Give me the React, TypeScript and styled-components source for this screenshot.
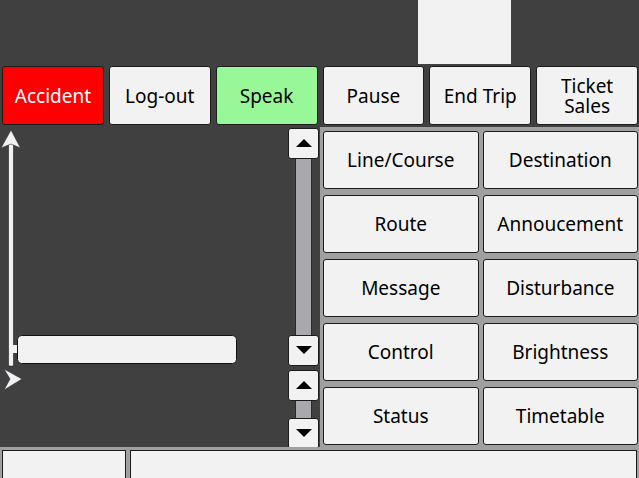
import React from "react";
import styled, { createGlobalStyle } from "styled-components";

const Global = createGlobalStyle`
  html, body { margin: 0; padding: 0; background: #404040; }
  body { font-family: "Segoe UI", "Noto Sans", "Open Sans", sans-serif; }
`;

const Page = styled.div`
  width: 639px;
  height: 478px;
  background: #404040;
  display: flex;
  flex-direction: column;
  overflow: hidden;
`;

const Header = styled.div`
  height: 64px;
  display: flex;
  padding-left: 418px;
  box-sizing: border-box;
`;

const HeaderPanel = styled.div`
  width: 93px;
  height: 64px;
  background: #f2f2f2;
`;

const TopBar = styled.div`
  display: grid;
  grid-template-columns: repeat(6, 1fr);
  column-gap: 5px;
  padding: 2px 1px 2px 2px;
  height: 63px;
  box-sizing: border-box;
`;

const Button = styled.button<{ $bg?: string; $fg?: string }>`
  margin: 0;
  padding: 0;
  box-sizing: border-box;
  border: 1px solid #1c1c1c;
  border-radius: 3px;
  background: ${(p) => p.$bg ?? "#f2f2f2"};
  color: ${(p) => p.$fg ?? "#000"};
  font-family: "Noto Sans", "Open Sans", sans-serif;
  font-size: 19px;
  line-height: 20px;
  display: flex;
  align-items: center;
  justify-content: center;
  text-align: center;
`;

const Main = styled.div`
  display: flex;
  height: 320px;
`;

const ChartArea = styled.div`
  width: 288px;
  height: 320px;
`;

const ScrollColumn = styled.div`
  width: 32px;
  display: flex;
  flex-direction: column;
  padding-top: 1px;
  box-sizing: border-box;
`;

const ScrollButton = styled.div`
  width: 31px;
  height: 31px;
  box-sizing: border-box;
  border: 1px solid #1c1c1c;
  border-radius: 3px;
  background: #f2f2f2;
  display: flex;
  align-items: center;
  justify-content: center;
  flex: none;
`;

const Track = styled.div<{ $h: number }>`
  height: ${(p) => p.$h}px;
  width: 17px;
  margin-left: 7px;
  box-sizing: border-box;
  background: #a9a9ad;
  border-left: 1px solid #2a2a2a;
  border-right: 1px solid #2a2a2a;
  flex: none;
`;

const ScrollGap = styled.div`
  height: 4px;
  flex: none;
`;

const Grid = styled.div`
  flex: 1;
  background: #a0a0a0;
  display: grid;
  grid-template-columns: 1fr 1fr;
  grid-auto-rows: 58px;
  column-gap: 4px;
  row-gap: 6px;
  padding: 4px 1px 2px 3px;
  box-sizing: border-box;
`;

const Footer = styled.div`
  height: 31px;
  background: #a0a0a0;
  display: flex;
  gap: 4px;
  padding: 3px 2px 0 2px;
  box-sizing: border-box;
`;

const StatusBox = styled.div<{ $w?: number }>`
  ${(p) => (p.$w ? `width: ${p.$w}px;` : "flex: 1;")}
  height: 29px;
  box-sizing: border-box;
  background: #f2f2f2;
  border: 1px solid #1c1c1c;
`;

const Up = () => (
  <svg width="16" height="9" viewBox="0 0 16 9">
    <polygon points="8,0 16,8 0,8" fill="#000" />
  </svg>
);
const Down = () => (
  <svg width="16" height="9" viewBox="0 0 16 9">
    <polygon points="0,0 16,0 8,8" fill="#000" />
  </svg>
);

const Chart = () => (
  <svg width="288" height="320" viewBox="0 0 288 320">
    <rect x="8.5" y="14" width="5" height="225" fill="#f2f2f2" stroke="#202020" strokeWidth="0.6" />
    <polygon points="11,3 20.5,21 11,17 1,21" fill="#f2f2f2" stroke="#303040" strokeWidth="0.6" />
    <rect x="13" y="218" width="5" height="8" fill="#f2f2f2" />
    <rect x="17.5" y="208.5" width="219" height="28" rx="4" fill="#f2f2f2" stroke="#111" strokeWidth="1" />
    <polygon points="4,242 22,252 4,263 10,252" fill="#f2f2f2" stroke="#303040" strokeWidth="0.6" />
  </svg>
);

const topButtons: { label: React.ReactNode; bg?: string; fg?: string }[] = [
  { label: "Accident", bg: "#ff0000", fg: "#fff" },
  { label: "Log-out" },
  { label: "Speak", bg: "#98f898" },
  { label: "Pause" },
  { label: "End Trip" },
  { label: <>Ticket<br />Sales</> },
];

const gridButtons = [
  "Line/Course",
  "Destination",
  "Route",
  "Annoucement",
  "Message",
  "Disturbance",
  "Control",
  "Brightness",
  "Status",
  "Timetable",
];

export default function App() {
  return (
    <>
      <Global />
      <Page>
        <Header>
          <HeaderPanel />
        </Header>
        <TopBar>
          {topButtons.map((b, i) => (
            <Button key={i} $bg={b.bg} $fg={b.fg}>
              {b.label}
            </Button>
          ))}
        </TopBar>
        <Main>
          <ChartArea>
            <Chart />
          </ChartArea>
          <ScrollColumn>
            <ScrollButton><Up /></ScrollButton>
            <Track $h={176} />
            <ScrollButton><Down /></ScrollButton>
            <ScrollGap />
            <ScrollButton><Up /></ScrollButton>
            <Track $h={17} />
            <ScrollButton><Down /></ScrollButton>
          </ScrollColumn>
          <Grid>
            {gridButtons.map((g) => (
              <Button key={g}>{g}</Button>
            ))}
          </Grid>
        </Main>
        <Footer>
          <StatusBox $w={124} />
          <StatusBox />
        </Footer>
      </Page>
    </>
  );
}
